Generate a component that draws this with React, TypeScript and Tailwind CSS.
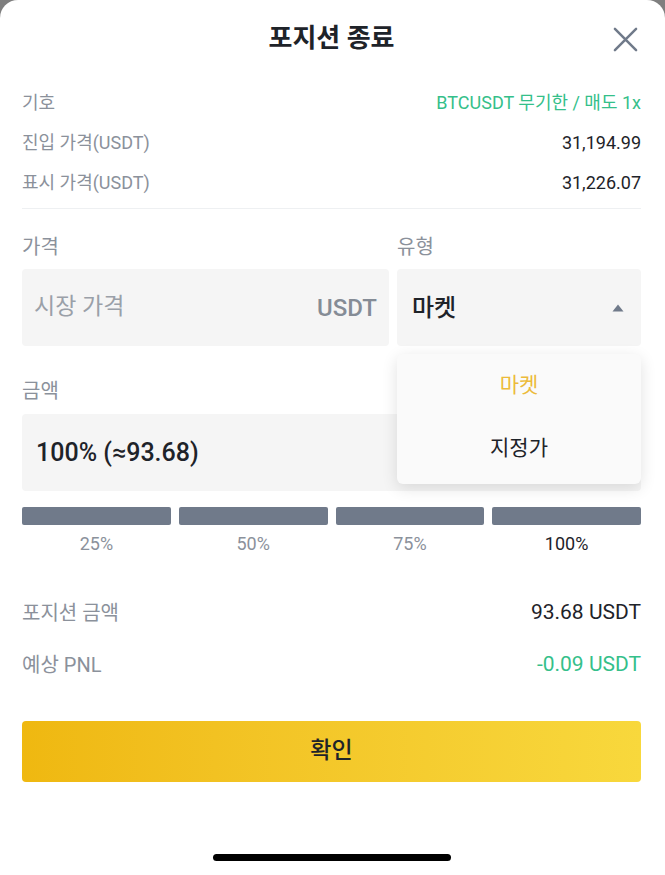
import React from "react";

const font = { fontFamily: "Roboto, 'Noto Sans CJK KR', sans-serif" };

function Row({ label, value, valueClass }: { label: string; value: string; valueClass?: string }) {
  return (
    <div className="h-[40px] flex items-center justify-between">
      <span className="text-[18px] text-[#8b919b]">{label}</span>
      <span className={"text-[18px] " + (valueClass ?? "text-[#1e2329]")}>{value}</span>
    </div>
  );
}

export default function App() {
  return (
    <div className="w-[665px] h-[875px] bg-[#7f7f7f] overflow-hidden" style={font}>
      <div className="relative h-full bg-white rounded-t-[18px] pl-[22px] pr-[24px] flex flex-col">
        <div className="relative h-[76px] flex items-center justify-center">
          <span className="text-[26px] font-semibold text-[#1e2329]">포지션 종료</span>
          <svg className="absolute right-[3px] top-[27px]" width="25" height="25" viewBox="0 0 26 26">
            <path d="M2 2L24 24M24 2L2 24" stroke="#707a8a" strokeWidth="2.6" strokeLinecap="round" />
          </svg>
        </div>
        <div className="mt-[6px]">
          <Row label="기호" value="BTCUSDT 무기한 / 매도 1x" valueClass="text-[#35bf8a]" />
          <Row label="진입 가격(USDT)" value="31,194.99" />
          <Row label="표시 가격(USDT)" value="31,226.07" />
        </div>
        <div className="mt-[6px] border-t border-[#eef0f2]" />
        <div className="grid grid-cols-[367px_244px] gap-x-[8px] mt-[26px]">
          <div className="h-[24px] flex items-center text-[20px] text-[#8b919b]">가격</div>
          <div className="h-[24px] flex items-center text-[20px] text-[#8b919b]">유형</div>
          <div className="mt-[10px] h-[77px] bg-[#f5f5f5] rounded-[4px] flex items-center justify-between px-[12px]">
            <span className="text-[23px] text-[#9aa0a8]">시장 가격</span>
            <span className="text-[24px] font-medium text-[#858c96]">USDT</span>
          </div>
          <div className="mt-[10px] h-[77px] bg-[#f5f5f5] rounded-[4px] flex items-center justify-between pl-[15px] pr-[17px]">
            <span className="text-[24px] font-medium text-[#1e2329]">마켓</span>
            <svg width="12" height="8" viewBox="0 0 12 8">
              <path d="M6 0.5L11.5 7.5H0.5Z" fill="#707a8a" />
            </svg>
          </div>
        </div>
        <div className="mt-[33px] h-[24px] flex items-center text-[20px] text-[#8b919b]">금액</div>
        <div className="mt-[11px] h-[77px] bg-[#f5f5f5] rounded-[4px] flex items-center px-[14px]">
          <span className="text-[25px] font-medium text-[#1e2329]">100% (≈93.68)</span>
        </div>
        <div className="mt-[16px] grid grid-cols-4 gap-[8px]">
          <div className="h-[18px] rounded-[2px] bg-[#707a8a]" />
          <div className="h-[18px] rounded-[2px] bg-[#707a8a]" />
          <div className="h-[18px] rounded-[2px] bg-[#707a8a]" />
          <div className="h-[18px] rounded-[2px] bg-[#707a8a]" />
        </div>
        <div className="mt-[7px] grid grid-cols-4 gap-[8px] text-[18px]">
          <div className="h-[22px] flex items-center justify-center text-[#8b919b]">25%</div>
          <div className="h-[22px] flex items-center justify-center text-[#8b919b]">50%</div>
          <div className="h-[22px] flex items-center justify-center text-[#8b919b]">75%</div>
          <div className="h-[22px] flex items-center justify-center text-[#1e2329]">100%</div>
        </div>
        <div className="mt-[39px]">
          <div className="h-[40px] flex items-center justify-between">
            <span className="text-[20px] text-[#8b919b]">포지션 금액</span>
            <span className="text-[21px] text-[#1e2329]">93.68 USDT</span>
          </div>
          <div className="mt-[12px] h-[40px] flex items-center justify-between">
            <span className="text-[20px] text-[#8b919b]">예상 PNL</span>
            <span className="text-[21px] text-[#35bf8a]">-0.09 USDT</span>
          </div>
        </div>
        <button className="mt-[36px] h-[61px] w-full rounded-[4px] bg-gradient-to-r from-[#efb810] to-[#f8d83c] flex items-center justify-center">
          <span className="text-[23px] font-medium text-[#1e2329]">확인</span>
        </button>
        <div className="mt-auto mb-[14px] self-center w-[238px] h-[7px] rounded-full bg-black" />

        <div className="absolute left-[397px] top-[354px] w-[244px] h-[130px] rounded-[6px] bg-[#fafafa] shadow-[0_4px_16px_rgba(0,0,0,0.12)] flex flex-col">
          <div className="h-[64px] flex items-center justify-center text-[21px] text-[#ecbb3a]">마켓</div>
          <div className="h-[62px] flex items-center justify-center text-[21px] text-[#1e2329]">지정가</div>
        </div>
      </div>
    </div>
  );
}
